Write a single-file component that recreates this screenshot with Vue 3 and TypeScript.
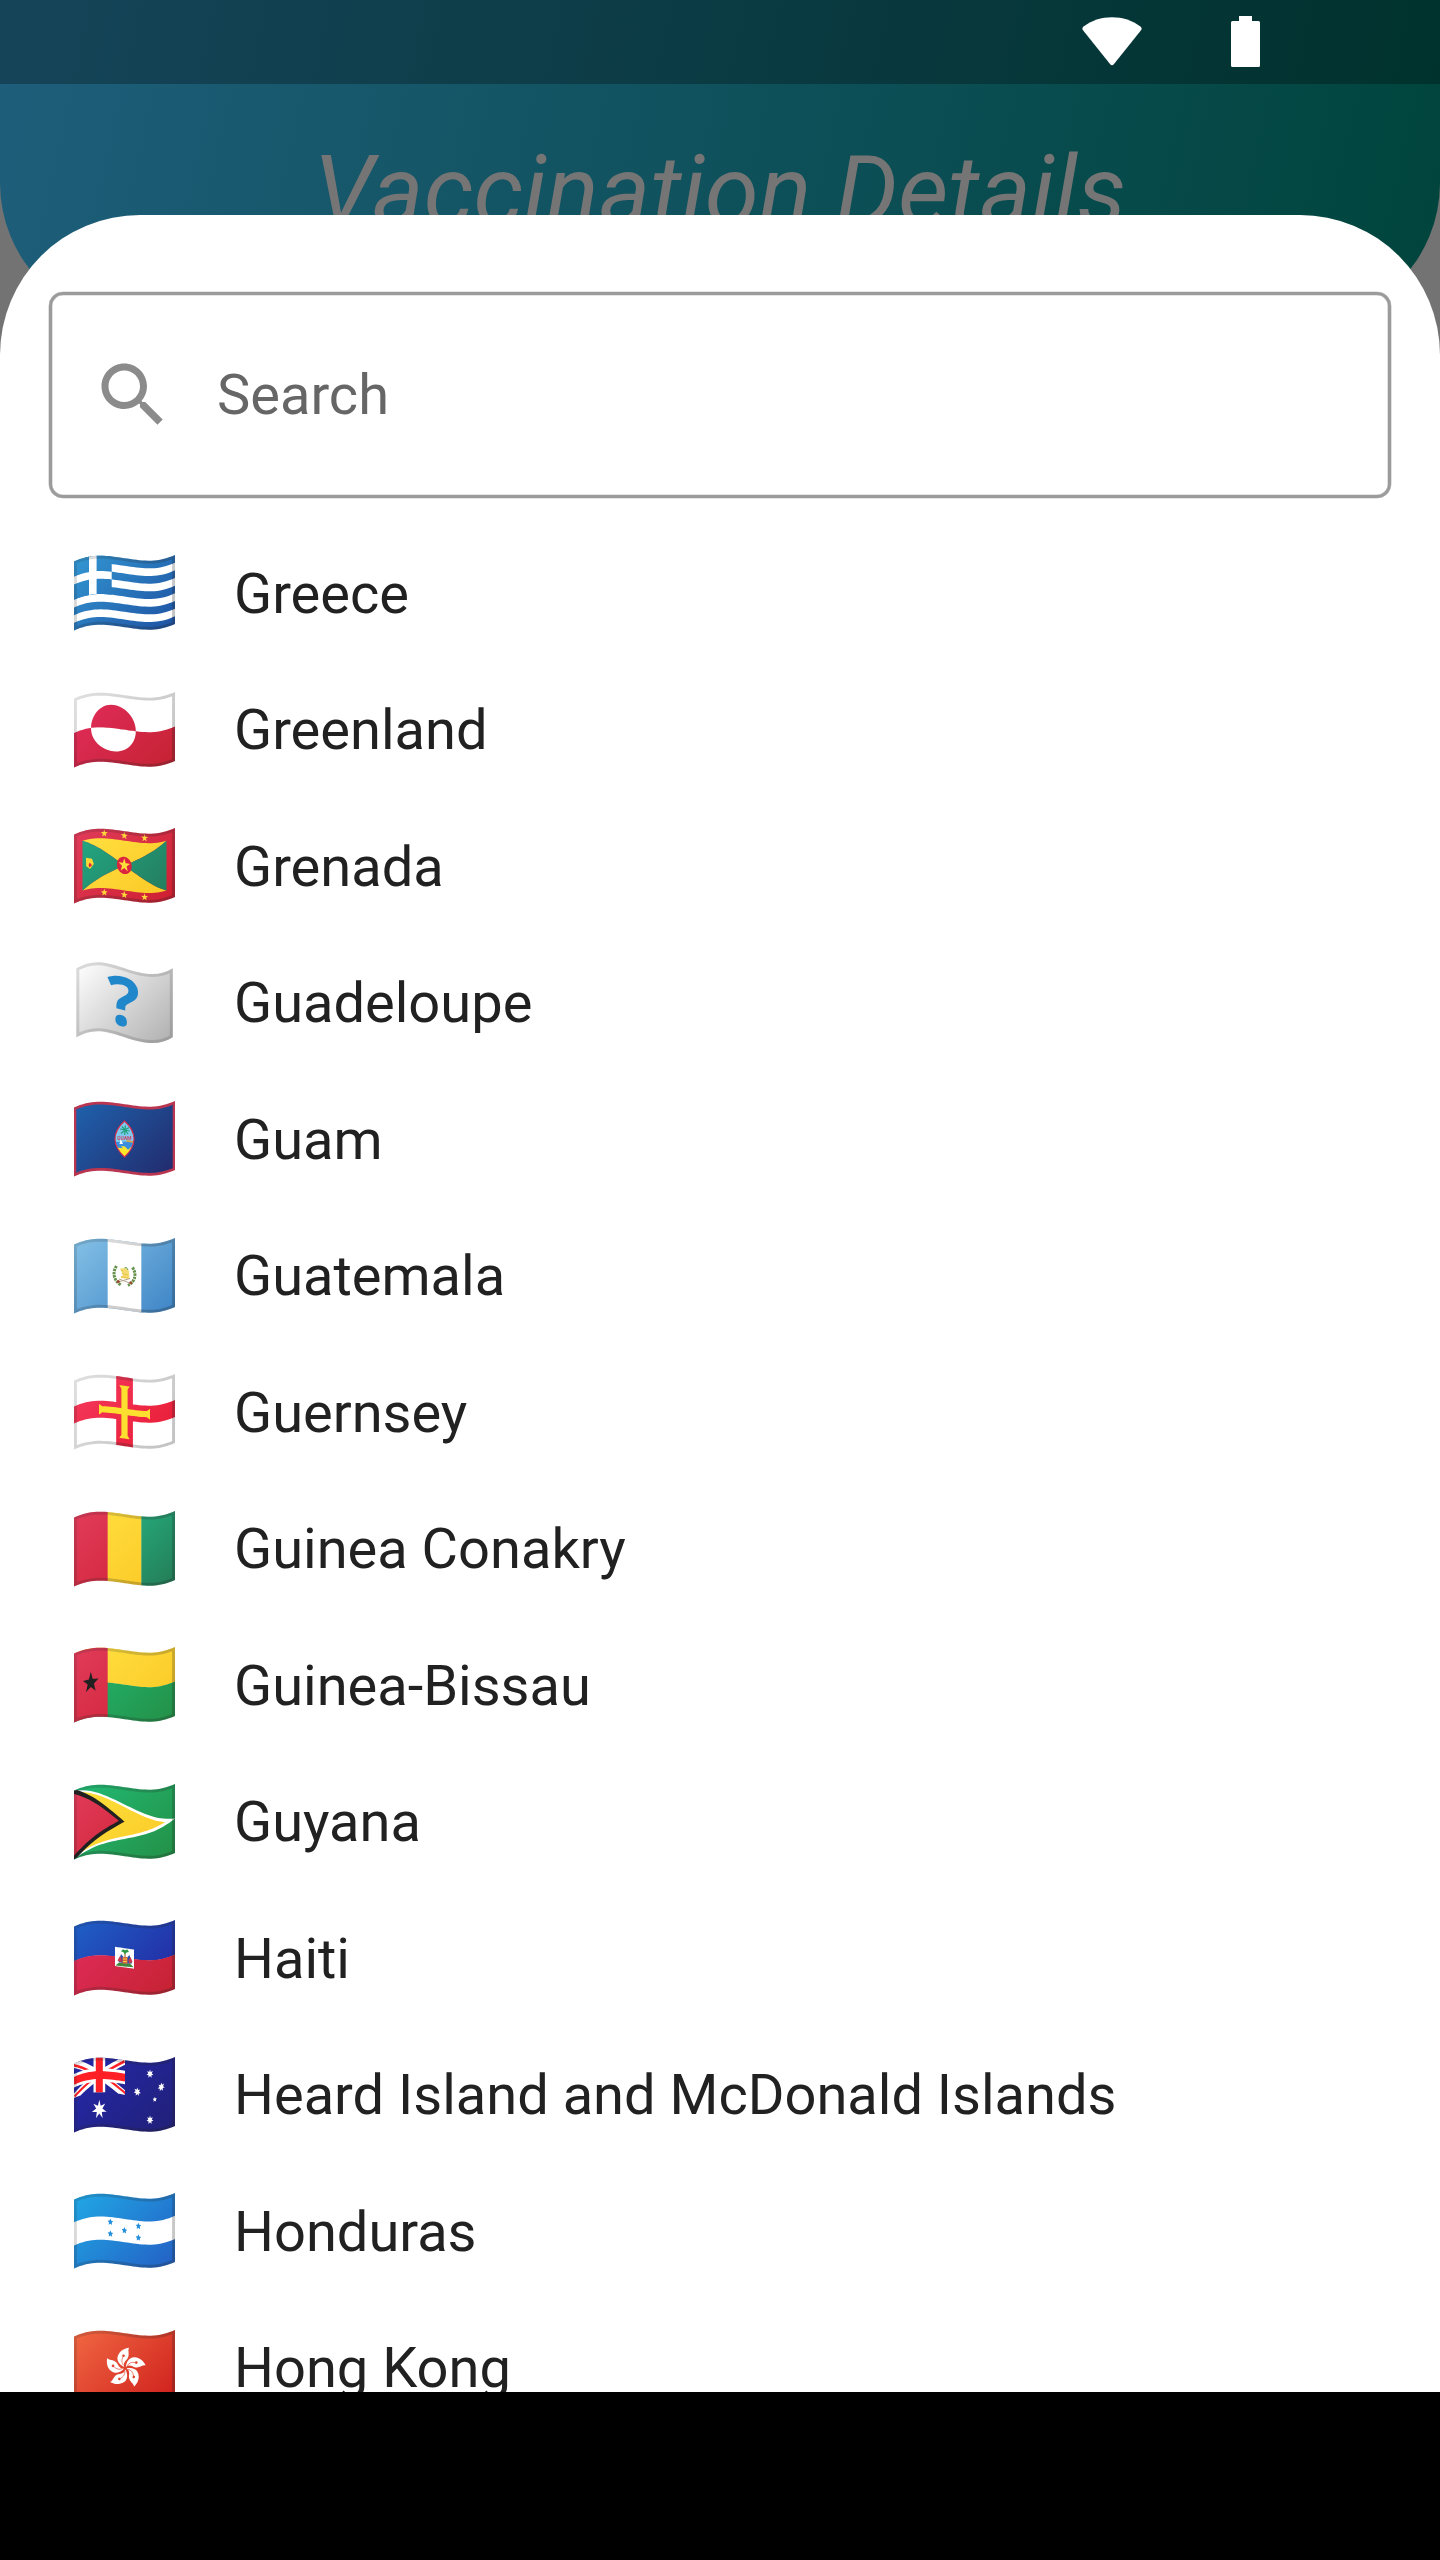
<script setup lang="ts">
import { computed, ref } from 'vue'

type Pt = [number, number]
interface Shape {
  d: string
  fill?: string
}
interface Country {
  name: string
  kind?: 'guam' | 'unknown' | 'guatemala' | 'haiti' | 'hongkong'
  shapes: Shape[]
}

const W = 101
const H = 69

// knots of the waving edge: x, y, slope
const knots = [
  [0, 6.5, -0.46],
  [26, 0.7, 0],
  [50, 3.1, 0.15],
  [76, 5.7, 0],
  [101, 0, -0.45],
]

function wave(x: number) {
  const cx = Math.max(0, Math.min(W, x))
  let i = 0
  while (i < knots.length - 2 && cx > knots[i + 1][0]) i++
  const [x0, y0, m0] = knots[i]
  const [x1, y1, m1] = knots[i + 1]
  const h = x1 - x0
  const t = (cx - x0) / h
  const t2 = t * t
  const t3 = t2 * t
  return (
    (2 * t3 - 3 * t2 + 1) * y0 +
    (t3 - 2 * t2 + t) * h * m0 +
    (-2 * t3 + 3 * t2) * y1 +
    (t3 - t2) * h * m1
  )
}

// takes a polygon of the flat flag and bends it along the wave
function warp(pts: Pt[]) {
  const out: string[] = []
  pts.forEach(([ax, ay], i) => {
    const [bx, by] = pts[(i + 1) % pts.length]
    const n = Math.max(1, Math.ceil(Math.abs(bx - ax) / 3))
    for (let k = 0; k < n; k++) {
      const x = ax + ((bx - ax) * k) / n
      const y = ay + ((by - ay) * k) / n
      out.push(`${x.toFixed(2)},${(y + wave(x)).toFixed(2)}`)
    }
  })
  return `M${out.join('L')}Z`
}

const poly = (fill: string, pts: Pt[]): Shape => ({ fill, d: warp(pts) })
const band = (fill: string, y0: number, y1: number, x0 = 0, x1 = W) =>
  poly(fill, [[x0, y0], [x1, y0], [x1, y1], [x0, y1]])

function star(fill: string, cx: number, cy: number, rx: number, ry = rx, n = 5, inner = 0.4) {
  const pts: Pt[] = []
  for (let i = 0; i < n * 2; i++) {
    const a = (Math.PI * i) / n - Math.PI / 2
    const k = i % 2 ? inner : 1
    pts.push([cx + Math.cos(a) * rx * k, cy + Math.sin(a) * ry * k])
  }
  return poly(fill, pts)
}

function disc(fill: string, cx: number, cy: number, rx: number, ry = rx, from = 0, to = 360) {
  const pts: Pt[] = []
  for (let a = from; a <= to; a += 6) {
    const r = (a * Math.PI) / 180
    pts.push([cx + Math.cos(r) * rx, cy + Math.sin(r) * ry])
  }
  return poly(fill, pts)
}

const gradients: Record<string, [string, string]> = {
  blue: ['#3193cf', '#1f55a5'],
  crimson: ['#e22c5c', '#c62334'],
  red: ['#e03a58', '#cf2033'],
  yellow: ['#ffe040', '#fbc825'],
  teal: ['#22a883', '#247a5c'],
  gold: ['#fde03a', '#fbc928'],
  navy: ['#1f5fa9', '#222d70'],
  sky: ['#80bde4', '#4288c8'],
  guernsey: ['#f5395c', '#e81c35'],
  green: ['#21b872', '#249249'],
  guinea: ['#26bd8c', '#248059'],
  royal: ['#1f5cc4', '#2426a0'],
  aussie: ['#2428a8', '#21207a'],
  azure: ['#21a3e3', '#2364c6'],
  orange: ['#ee6340', '#d0221d'],
  grey: ['#fafafa', '#b4b4b4'],
}
const g = (name: string) => `url(#fg-${name})`

const outline = warp([[0, 0], [W, 0], [W, H], [0, H]])
const unknownOutline =
  'M2.3,3.2C16,-4 26,-5.5 50,3C74,11.5 87,10.5 98.8,3.2V72.2C87,79.5 74,80.5 50,72C26,63.5 16,65 2.3,72.2Z'
const petal =
  'M-1,-1C-4.5,-2.5 -9.5,-7 -7.2,-12.5C-5,-17.500 -1,-19.500 4,-20.3C2,-18 4.8,-14 2.6,-10C1,-7.200 -2.4,-6 -1,-1Z'

const third = W / 3
const s9 = H / 9

const countries: Country[] = [
  {
    name: 'Greece',
    shapes: [
      band('#fff', 0, H),
      ...[0, 2, 4, 6, 8].map((i) => band(g('blue'), i * s9, (i + 1) * s9)),
      band(g('blue'), 0, s9 * 5, 0, 37.7),
      band('#fff', s9 * 2, s9 * 3, 0, 37.7),
      band('#fff', 0, s9 * 5, 15, 22.6),
    ],
  },
  {
    name: 'Greenland',
    shapes: [
      band('#fff', 0, H),
      band(g('crimson'), H / 2, H),
      disc('#fff', 39.4, H / 2, 22.4, 23.2, 0, 180),
      disc(g('crimson'), 39.4, H / 2, 22.4, 23.2, 180, 360),
    ],
  },
  {
    name: 'Grenada',
    shapes: [
      band(g('red'), 0, H),
      poly(g('yellow'), [[8.5, 9.5], [92.5, 9.5], [8.5, 59.3], [92.5, 59.3]]),
      poly(g('teal'), [[8.5, 9.5], [50.5, 34.4], [8.5, 59.3]]),
      poly(g('teal'), [[92.5, 9.5], [50.5, 34.4], [92.5, 59.3]]),
      disc('#dc2440', 50.3, 34.3, 7.4, 8.6),
      star('#ffe03a', 50.3, 34.1, 6, 7),
      ...[30.3, 50.3, 70.6].flatMap((x) => [
        star('#ffd83a', x, 4.5, 3.7, 4),
        star('#ffd83a', x, 63.7, 3.7, 4),
      ]),
      poly('#fdd835', [[12, 27.5], [18, 29.5], [19.8, 35], [16, 39.5], [12.2, 36]]),
      poly('#dc2440', [[15.8, 33], [18, 36], [15.5, 38], [14.6, 35.5]]),
    ],
  },
  { name: 'Guadeloupe', kind: 'unknown', shapes: [] },
  {
    name: 'Guam',
    kind: 'guam',
    shapes: [band('#b93550', 0, H), band(g('navy'), 2.8, H - 2.8, 2.3, W - 2.3)],
  },
  {
    name: 'Guatemala',
    kind: 'guatemala',
    shapes: [band(g('sky'), 0, H), band('#fff', 0, H, third, third * 2)],
  },
  {
    name: 'Guernsey',
    shapes: [
      band('#fff', 0, H),
      band(g('guernsey'), 26, 43, 0, W),
      band(g('guernsey'), 0, H, 42.2, 58.9),
      poly('#fde02f', [
        [45.3, 8.6], [55.7, 8.6], [53.6, 12], [53.6, 31.4], [72.8, 31.4], [76, 29.2],
        [76, 39.8], [72.8, 37.6], [53.6, 37.6], [53.6, 58], [55.7, 61.4], [45.3, 61.4],
        [47.4, 58], [47.4, 37.6], [28.2, 37.6], [25, 39.8], [25, 29.2], [28.2, 31.4],
        [47.4, 31.4], [47.4, 12],
      ]),
    ],
  },
  {
    name: 'Guinea Conakry',
    shapes: [
      band(g('red'), 0, H, 0, third + 0.3),
      band(g('yellow'), 0, H, third, third * 2 + 0.3),
      band(g('guinea'), 0, H, third * 2),
    ],
  },
  {
    name: 'Guinea-Bissau',
    shapes: [
      band(g('yellow'), 0, H / 2 + 0.3),
      band(g('green'), H / 2, H),
      band(g('red'), 0, H, 0, third),
      star('#212121', 16.8, 34.2, 8.2, 10.8),
    ],
  },
  {
    name: 'Guyana',
    shapes: [
      band(g('green'), 0, H),
      poly('#fff', [[0, 0], [W, 34.5], [0, H]]),
      poly(g('gold'), [[4, 3.2], [91, 34.5], [4, 65.8]]),
      poly('#212121', [[0, 0], [3, 0.8], [50.5, 34.5], [3, 68.2], [0, H]]),
      poly(g('red'), [[0, 3.6], [44.8, 34.5], [0, 65.2]]),
    ],
  },
  {
    name: 'Haiti',
    kind: 'haiti',
    shapes: [
      band(g('royal'), 0, H / 2 + 0.3),
      band(g('crimson'), H / 2, H),
      band('#fff', 25, 44.2, 41, 60),
    ],
  },
  {
    name: 'Heard Island and McDonald Islands',
    shapes: [
      band(g('aussie'), 0, H),
      poly('#fff', [[0, 0], [6.5, 0], [51, 30], [51, 34.5], [44.5, 34.5], [0, 4.5]]),
      poly('#fff', [[51, 0], [44.5, 0], [0, 30], [0, 34.5], [6.5, 34.5], [51, 4.5]]),
      poly('#ff1f25', [[0, 0.6], [20, 14], [17, 14.6], [0, 3.2]]),
      poly('#ff1f25', [[51, 33.9], [31, 20.5], [34, 19.9], [51, 31.3]]),
      poly('#ff1f25', [[50, 0], [31, 13], [34, 13.6], [51, 2.4]]),
      poly('#ff1f25', [[1, 34.5], [20, 21.5], [17, 20.9], [0, 32.1]]),
      band('#fff', 10.5, 24, 0, 51),
      band('#fff', 0, 34.5, 19.5, 31.2),
      band('#ff1f25', 13.4, 21.2, 0, 51),
      band('#ff1f25', 0, 34.5, 21.8, 28.8),
      star('#fff', 25.3, 51.7, 7.6, 9.6, 7, 0.42),
      star('#fff', 76, 11.2, 3.6, 4.4, 7, 0.5),
      star('#fff', 87.3, 25.5, 3.6, 4.4, 7, 0.5),
      star('#fff', 63.3, 30, 3.6, 4.4, 7, 0.5),
      star('#fff', 80.8, 37, 2.2, 2.6, 5, 0.5),
      star('#fff', 76, 57.3, 3.6, 4.4, 7, 0.5),
    ],
  },
  {
    name: 'Honduras',
    shapes: [
      band('#fff', 0, H),
      band(g('azure'), 0, 22.8),
      band(g('azure'), 46, H),
      ...([[36.4, 27.8], [36.4, 39.5], [50.4, 34.3], [64.4, 28.1], [64.4, 39.8]] as Pt[]).map(
        ([x, y]) => star('#2490dc', x, y, 2.9, 3.5, 5, 0.5),
      ),
    ],
  },
  { name: 'Hong Kong', kind: 'hongkong', shapes: [band(g('orange'), 0, H)] },
]

const query = ref('')
const filtered = computed(() =>
  countries.filter((c) => c.name.toLowerCase().includes(query.value.trim().toLowerCase())),
)
</script>

<template>
  <div class="screen">
    <svg class="defs" width="0" height="0" aria-hidden="true">
      <defs>
        <linearGradient
          v-for="(stops, key) in gradients"
          :id="`fg-${key}`"
          :key="key"
          gradientUnits="userSpaceOnUse"
          x1="12"
          y1="0"
          x2="89"
          y2="76"
        >
          <stop offset="0" :stop-color="stops[0]" />
          <stop offset="1" :stop-color="stops[1]" />
        </linearGradient>
        <linearGradient id="fg-rim" gradientUnits="userSpaceOnUse" x1="0" y1="0" x2="101" y2="76">
          <stop offset="0" stop-color="#212121" stop-opacity="0.14" />
          <stop offset="1" stop-color="#212121" stop-opacity="0.28" />
        </linearGradient>
        <clipPath id="flag-clip"><path :d="outline" /></clipPath>
        <clipPath id="unknown-clip"><path :d="unknownOutline" /></clipPath>
      </defs>
    </svg>

    <header class="header">
      <div class="status">
        <svg class="wifi" viewBox="0 0 60 49">
          <path d="M1.2,13.6Q-.6,11.3 1.6,9.5C17,-3 43,-3 58.4,9.5Q60.6,11.3 58.8,13.6L32,47Q30,49.4 28,47Z" />
        </svg>
        <svg class="battery" viewBox="0 0 29 51">
          <path d="M8,0H21V5H27.5Q29,5 29,6.5V49.5Q29,51 27.5,51H1.5Q0,51 0,49.5V6.5Q0,5 1.5,5H8Z" />
        </svg>
      </div>
      <h1 class="title">Vaccination Details</h1>
    </header>

    <section class="sheet">
      <label class="search">
        <svg class="search-icon" viewBox="0 0 24 24">
          <path
            d="M15.5 14h-.79l-.28-.27C15.41 12.59 16 11.11 16 9.5 16 5.91 13.09 3 9.5 3S3 5.91 3 9.5 5.91 16 9.5 16c1.61 0 3.09-.59 4.23-1.57l.27.28v.79l5 4.99L20.49 19l-4.99-5zm-6 0C7.01 14 5 11.99 5 9.5S7.01 5 9.5 5 14 7.01 14 9.5 11.99 14 9.5 14z"
          />
        </svg>
        <input v-model="query" type="text" placeholder="Search" />
      </label>

      <ul class="list">
        <li v-for="c in filtered" :key="c.name" class="row">
          <svg class="flag" viewBox="0 0 101 76">
            <template v-if="c.kind === 'unknown'">
              <path :d="unknownOutline" :fill="g('grey')" />
              <path
                :d="unknownOutline"
                fill="none"
                stroke="#212121"
                stroke-opacity="0.15"
                stroke-width="6"
                clip-path="url(#unknown-clip)"
              />
              <text class="mark" transform="translate(49.5 61) skewY(14)">?</text>
            </template>
            <template v-else>
              <path v-for="(s, i) in c.shapes" :key="i" :d="s.d" :fill="s.fill" />

              <g v-if="c.kind === 'guam'">
                <path d="M50.5,20C57,26 60,32 60,38C60,44 57,50 50.5,56C44,50 41,44 41,38C41,32 44,26 50.5,20Z" fill="#80c8ee" />
                <path d="M41.5,41L60,40.5C59.5,44 58.5,46 56.5,49L44,47Z" fill="#3a8ee0" />
                <path d="M43.5,46.5L49,47.5L47,45L51,45.5L54,49L57.5,45.5C56,50 53.5,53.5 50.5,55.5C47.5,53 45,50 43.5,46.5Z" fill="#ffe928" />
                <path d="M53,39L60,40.6L59.5,42L52,40.5Z" fill="#d9a441" />
                <path d="M45.5,43L46.7,38L49,43Z" fill="#fff" />
                <path
                  d="M51,29L50.7,34M51,29L46,28M51,29L47,32.5M51,29L48,25.5M51,29L51.5,24.5M51,29L55,26.5M51,29L55.5,30M51,29L54,33"
                  fill="none"
                  stroke="#1fa37c"
                  stroke-width="1.2"
                />
                <text class="tiny" x="50.5" y="39">GUAM</text>
                <path
                  d="M50.5,20C57,26 60,32 60,38C60,44 57,50 50.5,56C44,50 41,44 41,38C41,32 44,26 50.5,20Z"
                  fill="none"
                  stroke="#d92b4b"
                  stroke-width="1.1"
                />
              </g>

              <g v-else-if="c.kind === 'guatemala'" fill="none">
                <path d="M42.5,28C38.5,34 39,42 47,47" stroke="#64904a" stroke-width="3" stroke-dasharray="2.4 .8" />
                <path d="M58.5,29.5C62.5,35 62,43 54,47.5" stroke="#64904a" stroke-width="3" stroke-dasharray="2.4 .8" />
                <path d="M46,30.5L52,30L55,33L55.5,41L46.5,40L49,37Z" fill="#f5dc72" />
                <path d="M47,32L49,33M48,35.5L54,37M47,38.5L54,40" stroke="#e3b93c" stroke-width="0.8" />
                <path d="M44,44L56,40.5M45,41L57,45.5" stroke="#b5a58e" stroke-width="1" />
                <circle cx="44.3" cy="43.5" r="1.5" fill="#9c4a32" />
                <circle cx="56.8" cy="44.8" r="1.5" fill="#9c4a32" />
                <path d="M54,32L52.5,29.5L50.5,29.8" stroke="#4f8f43" stroke-width="0.9" />
              </g>

              <g v-else-if="c.kind === 'haiti'">
                <path d="M41.5,45.5L45,42.5L56,43.5L59.6,47.3L50,46.5Z" fill="#3f8a3c" />
                <path d="M44.5,42L47,34L49.5,37L49,43Z" fill="#2b4fa8" />
                <path d="M58,43.5L55.5,35L53,37.5L53,43.5Z" fill="#2b4fa8" />
                <path d="M43.5,40.5L46,36L48,40L47.5,42.5Z" fill="#c9384c" />
                <path d="M58.6,42L56.5,37L54.5,40.5L55,43.5Z" fill="#c9384c" />
                <rect x="48.5" y="37" width="5" height="6.5" fill="#e0673c" />
                <path d="M49,39H53M49,41.5H53" stroke="#f6cf3c" stroke-width="1" />
                <path d="M50.4,31H51.6V37.5H50.4Z" fill="#a5743b" />
                <path d="M47,31.2L49,29.2L51,30.3L53.5,29.6L55,32L52.5,32.5L51,34.5L49.5,32.3Z" fill="#2e9a48" />
              </g>

              <g v-else-if="c.kind === 'hongkong'" transform="translate(51.2 38)">
                <g v-for="n in 5" :key="n" :transform="`rotate(${(n - 1) * 72})`">
                  <path :d="petal" fill="#fff" />
                  <path d="M-1.5,-2.5C-3.5,-5 -4,-8 -2,-11.5" fill="none" stroke="#e2402a" stroke-width="0.6" />
                  <circle cx="-1.7" cy="-12.3" r="1.3" fill="#e2402a" />
                </g>
              </g>

              <path
                v-if="c.kind !== 'guam'"
                :d="outline"
                fill="none"
                stroke="url(#fg-rim)"
                stroke-width="5.8"
                clip-path="url(#flag-clip)"
              />
            </template>
          </svg>
          <span class="name">{{ c.name }}</span>
        </li>
      </ul>
    </section>

    <footer class="navbar"></footer>
  </div>
</template>

<style>
body {
  margin: 0;
  background: #000;
}
</style>

<style scoped>
.screen {
  width: 1440px;
  height: 2560px;
  display: flex;
  flex-direction: column;
  overflow: hidden;
  background: #737373;
  font-family: Roboto, 'Liberation Sans', sans-serif;
}
.defs {
  position: absolute;
}
.header {
  height: 323px;
  flex-shrink: 0;
  border-radius: 0 0 140px 140px;
  background: linear-gradient(102.6deg, #1e5e7b 0%, #00443c 100%);
  overflow: hidden;
}
.status {
  height: 84px;
  box-sizing: border-box;
  padding: 16px 180px 0 0;
  display: flex;
  justify-content: flex-end;
  align-items: flex-start;
  gap: 89px;
  background: rgba(0, 0, 0, 0.27);
}
.status svg {
  fill: #fff;
}
.wifi {
  width: 60px;
  height: 49px;
  margin-top: 1px;
}
.battery {
  width: 29px;
  height: 51px;
}
.title {
  margin: 0;
  padding-top: 50px;
  font-size: 98px;
  line-height: 115px;
  font-weight: 400;
  font-style: italic;
  text-align: center;
  color: #757575;
}
.sheet {
  position: relative;
  flex: 1;
  min-height: 0;
  margin-top: -108px;
  box-sizing: border-box;
  padding-top: 77px;
  border-radius: 140px 140px 0 0;
  background: #fff;
  overflow: hidden;
}
.search {
  display: flex;
  align-items: center;
  height: 206px;
  margin: 0 49px;
  padding-left: 39px;
  box-sizing: border-box;
  border: 3px solid #9b9b9b;
  border-radius: 14px;
  box-shadow:
    0 0 0 0.3px #9b9b9b,
    inset 0 0 0 0.3px #9b9b9b;
}
.search-icon {
  width: 84px;
  height: 84px;
  fill: #8b8b8b;
}
.search input {
  flex: 1;
  min-width: 0;
  margin-left: 42px;
  padding: 0;
  border: 0;
  outline: none;
  background: none;
  font: inherit;
  font-size: 56px;
  color: #212121;
}
.search input::placeholder {
  color: #666;
  opacity: 1;
}
.list {
  list-style: none;
  margin: 0;
  padding: 27px 0 0 74px;
}
.row {
  display: flex;
  align-items: center;
  height: 136.5px;
}
.flag {
  width: 101px;
  height: 76px;
  flex-shrink: 0;
  overflow: visible;
}
.mark {
  font-family: 'Open Sans', 'Noto Sans', sans-serif;
  font-size: 68px;
  font-weight: 700;
  text-anchor: middle;
  fill: #2187cb;
}
.tiny {
  font-family: Roboto, sans-serif;
  font-size: 5px;
  font-weight: 700;
  text-anchor: middle;
  fill: #c94a6b;
}
.name {
  padding-top: 1px;
  margin-left: 59px;
  font-size: 56px;
  white-space: nowrap;
  color: #212121;
}
.navbar {
  height: 168px;
  flex-shrink: 0;
  background: #000;
}
</style>
